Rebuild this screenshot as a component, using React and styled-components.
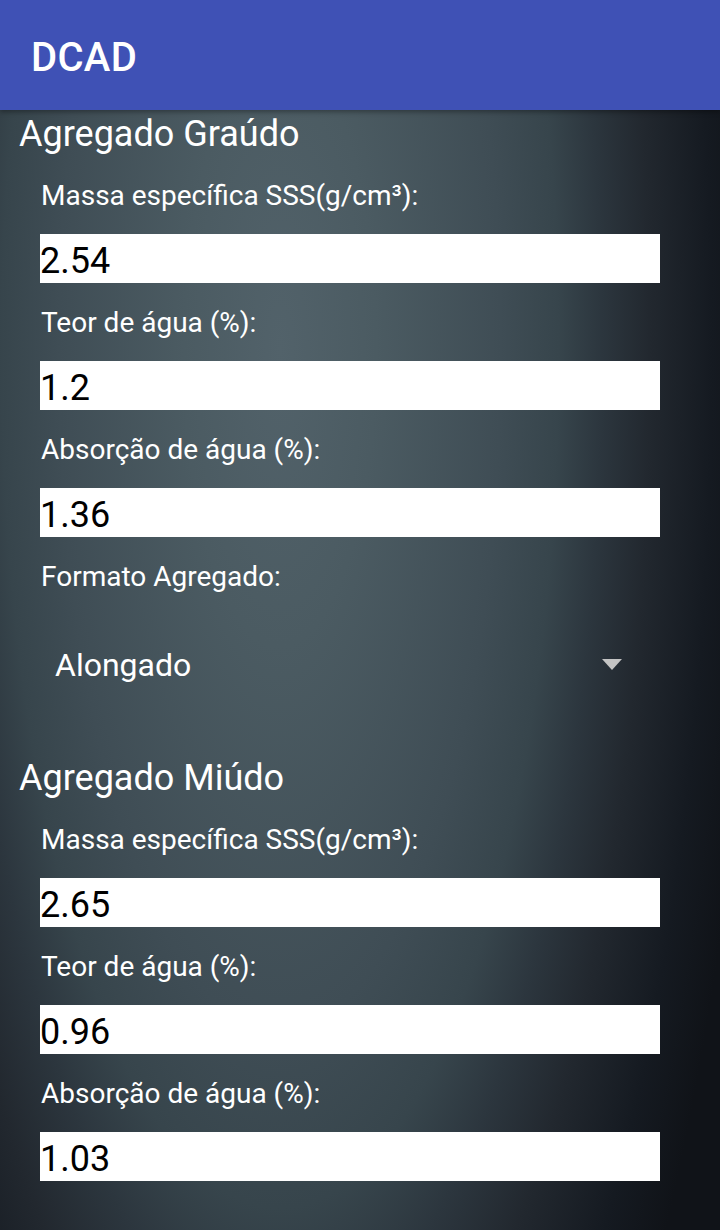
import React from "react";
import styled, { createGlobalStyle } from "styled-components";

const Global = createGlobalStyle`
  html, body { margin: 0; padding: 0; }
  body { font-family: Roboto, "Noto Sans", sans-serif; background: #101318; }
`;

const Screen = styled.div`
  width: 720px;
  height: 1230px;
  overflow: hidden;
  background: radial-gradient(480px 1480px at 280px 350px,
    #52626a 0%, #4b5b62 20%, #3f4d55 46%, #37454c 58%, #2c363e 67%,
    #22282f 77%, #151a21 90%, #101318 100%);
  display: flex;
  flex-direction: column;
`;

const AppBar = styled.header`
  height: 110px;
  flex: none;
  background: #3f51b5;
  box-shadow: 0 2px 5px rgba(0, 0, 0, 0.35);
  display: flex;
  align-items: center;
  padding: 4px 0 0 31px;
  box-sizing: border-box;
  position: relative;
  z-index: 1;
`;

const Title = styled.h1`
  margin: 0;
  color: #fff;
  font-family: Roboto, sans-serif;
  font-weight: 500;
  font-size: 40px;
  letter-spacing: 0.3px;
`;

const Content = styled.main`
  padding-top: 4px;
  display: flex;
  flex-direction: column;
`;

const Section = styled.section`
  display: flex;
  flex-direction: column;
  margin-top: ${(p) => p.$gap || 0}px;
`;

const Heading = styled.h2`
  margin: 0 0 2px;
  padding-left: 19px;
  font-family: Roboto, sans-serif;
  font-weight: 400;
  font-size: 36px;
  line-height: 40px;
  color: #fff;
`;

const Field = styled.div`
  display: flex;
  flex-direction: column;
  gap: 21px;
  padding: 23px 0 0 40px;
  width: 620px;
`;

const Label = styled.label`
  font-family: Roboto, sans-serif;
  font-size: 28px;
  line-height: 34px;
  padding-left: 1px;
  color: #fff;
`;

const Input = styled.input`
  display: block;
  box-sizing: border-box;
  width: 620px;
  height: 49px;
  margin: 0;
  border: none;
  outline: none;
  padding: 4px 0 0 0;
  background: #fff;
  color: #000;
  font-family: Roboto, sans-serif;
  font-size: 36px;
`;

const Spinner = styled.div`
  height: 96px;
  display: flex;
  align-items: center;
  justify-content: space-between;
  padding: 0 38px 0 15px;
  margin-top: 1px;
  box-sizing: border-box;
`;

const SpinnerText = styled.span`
  font-family: Roboto, sans-serif;
  font-size: 32px;
  color: #fff;
  padding-top: 2px;
`;

const Caret = () => (
  <svg width="20" height="11" viewBox="0 0 20 11">
    <polygon points="0,0 20,0 10,11" fill="#c4c4c4" />
  </svg>
);

const TextField = ({ label, value }) => (
  <Field>
    <Label>{label}</Label>
    <Input type="text" defaultValue={value} />
  </Field>
);

export default function App() {
  return (
    <>
      <Global />
      <Screen>
        <AppBar>
          <Title>DCAD</Title>
        </AppBar>
        <Content>
          <Section>
            <Heading>Agregado Graúdo</Heading>
            <TextField label="Massa específica SSS(g/cm³):" value="2.54" />
            <TextField label="Teor de água (%):" value="1.2" />
            <TextField label="Absorção de água (%):" value="1.36" />
            <Field>
              <Label>Formato Agregado:</Label>
              <Spinner>
                <SpinnerText>Alongado</SpinnerText>
                <Caret />
              </Spinner>
            </Field>
          </Section>
          <Section $gap={46}>
            <Heading>Agregado Miúdo</Heading>
            <TextField label="Massa específica SSS(g/cm³):" value="2.65" />
            <TextField label="Teor de água (%):" value="0.96" />
            <TextField label="Absorção de água (%):" value="1.03" />
          </Section>
        </Content>
      </Screen>
    </>
  );
}
